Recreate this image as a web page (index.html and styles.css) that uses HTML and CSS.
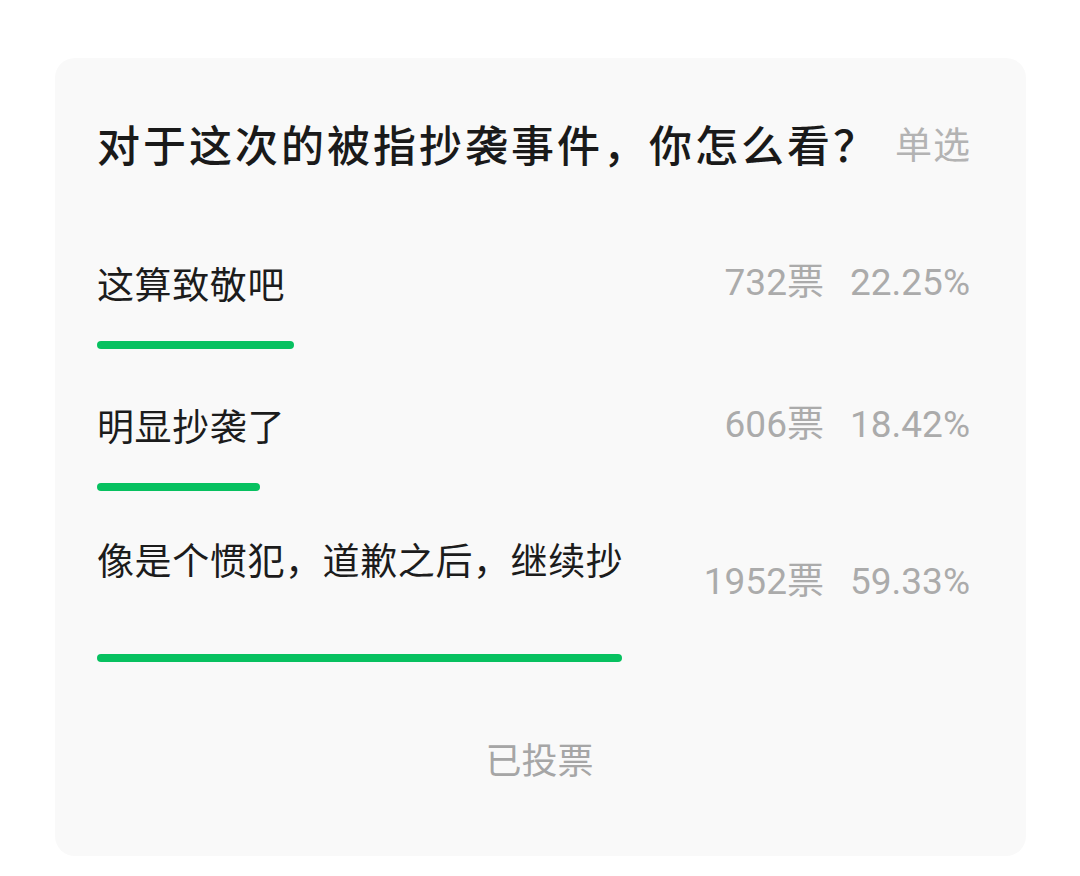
FILE: index.html
```html
<!DOCTYPE html>
<html lang="zh-CN">
<head>
<meta charset="utf-8">
<title>投票</title>
<link rel="stylesheet" href="styles.css">
</head>
<body>
<div class="card">
  <div class="title-row">
    <h1 class="title">对于这次的被指抄袭事件，你怎么看？</h1>
    <span class="tag">单选</span>
  </div>

  <div class="option option--first">
    <div class="opt-row">
      <div class="opt-text">这算致敬吧</div>
      <div class="opt-stats"><span class="votes">732票</span><span class="pct">22.25%</span></div>
    </div>
    <div class="bar-track"><div class="bar" style="width:22.25%"></div></div>
  </div>

  <div class="option">
    <div class="opt-row">
      <div class="opt-text">明显抄袭了</div>
      <div class="opt-stats"><span class="votes">606票</span><span class="pct">18.42%</span></div>
    </div>
    <div class="bar-track"><div class="bar" style="width:18.42%"></div></div>
  </div>

  <div class="option option--wrap">
    <div class="opt-row">
      <div class="opt-text">像是个惯犯，道歉之后，继续抄</div>
      <div class="opt-stats"><span class="votes">1952票</span><span class="pct">59.33%</span></div>
    </div>
    <div class="bar-track"><div class="bar" style="width:59.33%"></div></div>
  </div>

  <div class="footer">已投票</div>
</div>
</body>
</html>
```

FILE: styles.css
```css
html, body {
  margin: 0;
  padding: 0;
  background: #ffffff;
}

body {
  font-family: Roboto, "Noto Sans CJK SC", "Noto Sans", sans-serif;
  color: #1c1c1c;
}

.card {
  box-sizing: border-box;
  margin: 58px 0 0 55px;
  width: 971px;
  height: 798px;
  padding: 57px 44px 0 42px;
  background: #f9f9f9;
  border-radius: 20px;
}

.title-row {
  display: flex;
  align-items: center;
}

.title {
  margin: 0;
  font-family: "Noto Sans CJK SC", sans-serif;
  font-size: 43px;
  line-height: 56px;
  font-weight: 500;
  letter-spacing: 3px;
  color: #1a1a1a;
}

.tag {
  margin-left: 16px;
  font-family: "Noto Sans CJK SC", sans-serif;
  font-size: 37px;
  line-height: 56px;
  letter-spacing: 1px;
  color: #b3b3b3;
}

.option {
  margin-top: 53px;
}

.option--first {
  margin-top: 89px;
}

.option--wrap {
  margin-top: 45px;
}

.opt-row {
  display: flex;
  align-items: center;
  justify-content: space-between;
}

.opt-text {
  font-family: "Noto Sans CJK SC", sans-serif;
  font-size: 37px;
  line-height: 46px;
  letter-spacing: 0.6px;
  color: #1c1c1c;
}

.option--wrap .opt-text {
  height: 92px;
}

.opt-stats {
  display: flex;
  padding-right: 12px;
  font-size: 37px;
  line-height: 46px;
  color: #ababab;
}

.pct {
  margin-left: 26px;
}

.bar-track {
  margin-top: 35px;
  height: 8px;
}

.option--wrap .bar-track {
  margin-top: 26px;
}

.bar {
  height: 8px;
  border-radius: 4px;
  background: #07c160;
}

.footer {
  margin-top: 73px;
  text-align: center;
  font-family: "Noto Sans CJK SC", sans-serif;
  font-size: 36px;
  line-height: 46px;
  color: #a6a6a6;
}
```
